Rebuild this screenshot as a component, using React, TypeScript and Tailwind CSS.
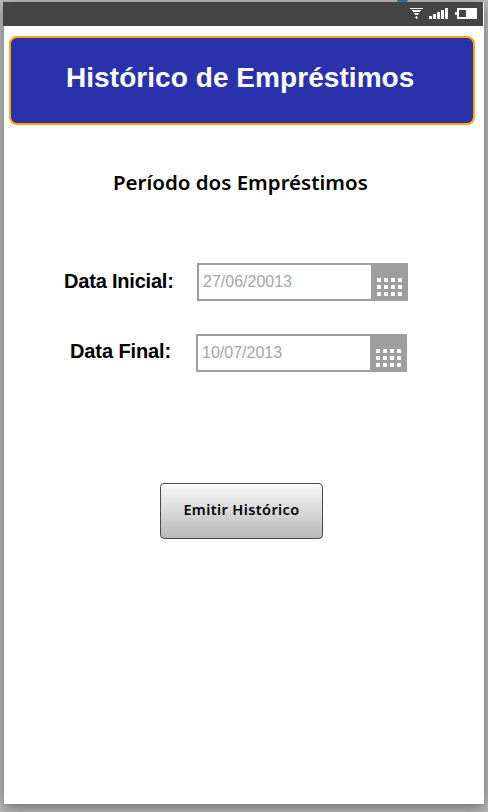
function StatusIcons() {
  return (
    <svg width="80" height="24" viewBox="403 2 80 24" shapeRendering="crispEdges" fill="#fff" aria-hidden="true">
      <path d="M410 8h13v1h-13zM412 10h9v1h-1v1h-7v-1h-1zM414 13h5v1h-1v1h-3v-1h-1zM416 16h1v1h1v1h-1v1h-1v-1h-1v-1h1z" />
      <path d="M429 16h3v3h-3zM433 14h3v5h-3zM437 12h3v7h-3zM441 10h3v9h-3zM445 8h3v11h-3z" />
      <path d="M457 8h20v11h-20v-4h-2v-3h2zM459 10v7h7v-7z" fillRule="evenodd" />
    </svg>
  );
}

function DateField({ value }: { value: string }) {
  return (
    <div className="flex h-[38px] w-[211px] border-2 border-[#9e9e9e] bg-white">
      <div className="flex-1 pl-1 pt-[5px] font-['Liberation_Sans',sans-serif] text-base leading-6 text-[#a6a6a6]">{value}</div>
      <div className="grid w-[35px] grid-cols-[repeat(4,4px)] content-start gap-[3px] bg-[#9e9e9e] pl-[6px] pt-[13px]">
        {Array.from({ length: 12 }, (_, i) => (
          <span key={i} className="size-1 bg-white" />
        ))}
      </div>
    </div>
  );
}

export default function App() {
  return (
    <div className="h-[812px] w-[488px] overflow-hidden bg-[#b8b8b8] font-['Liberation_Sans',sans-serif]">
      <div className="h-0.5 pl-[397px]">
        <div className="h-0.5 w-[11px] rounded-b-full bg-[#226f86]" />
      </div>
      <div className="ml-1 h-[802px] w-[480px] bg-white shadow-[0_4px_12px_0_#707070]">
        <div className="-ml-px flex h-6 w-[480px] justify-end bg-[#444444]">
          <StatusIcons />
        </div>
        <header className="ml-[5px] mt-2.5 h-[89px] w-[466px] rounded-lg border-2 border-[#ffa500] bg-[#2a32ab] pl-[55px] pt-[22px]">
          <h1 className="whitespace-nowrap text-[28px] font-bold leading-9 tracking-[0.06px] text-white">Histórico de Empréstimos</h1>
        </header>
        <h2 className="ml-[109px] mt-[43px] h-7 whitespace-nowrap font-['Noto_Sans',sans-serif] text-[20.5px] font-semibold leading-7 text-black">
          Período dos Empréstimos
        </h2>
        <div className="mt-[67px] flex pl-[60px]">
          <label className="w-[133px] whitespace-nowrap pt-[6px] text-xl font-bold leading-6 tracking-[-0.2px] text-black">Data Inicial:</label>
          <DateField value="27/06/20013" />
        </div>
        <div className="mt-[33px] flex pl-[66px]">
          <label className="w-[126px] whitespace-nowrap pt-[5px] text-xl font-bold leading-6 tracking-[-0.1px] text-black">Data Final:</label>
          <DateField value="10/07/2013" />
        </div>
        <button className="ml-[156px] mt-[111px] flex h-14 w-[163px] justify-center whitespace-nowrap rounded border border-[#4b4b4b] bg-linear-to-b from-[#fafafa] to-[#b8b8b8] pt-[15px] font-['Noto_Sans',sans-serif] text-[14.5px] font-semibold leading-5 tracking-[0.4px] text-black">
          Emitir Histórico
        </button>
      </div>
    </div>
  );
}
